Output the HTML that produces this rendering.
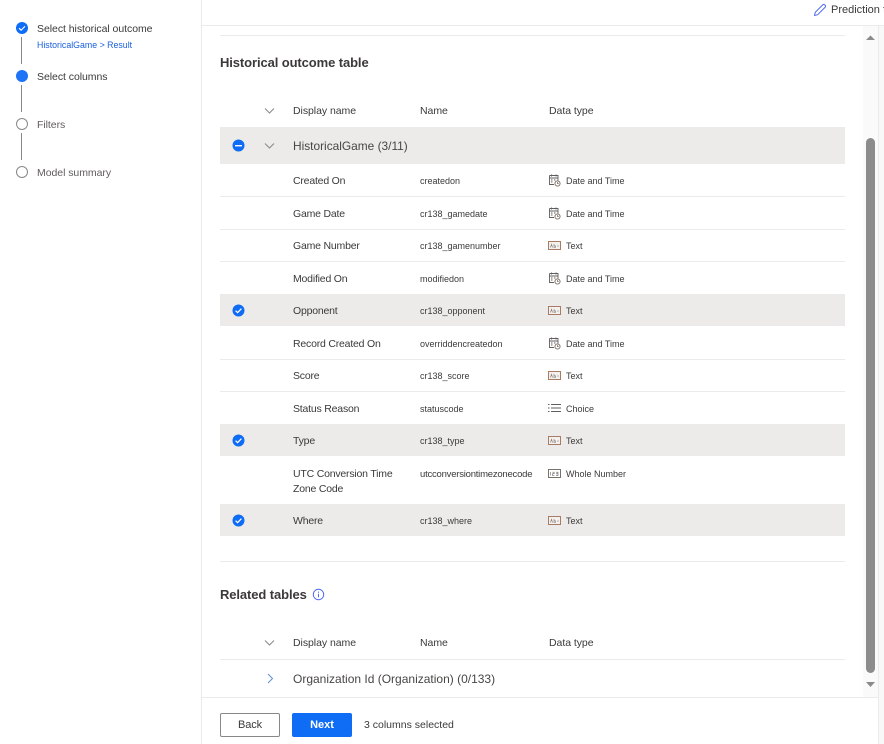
<!DOCTYPE html>
<html><head><meta charset="utf-8"><style>
html,body{margin:0;padding:0;background:#fff}
body{width:884px;height:744px;position:relative;overflow:hidden;font-family:"Liberation Sans",sans-serif;color:#3b3a39}
.t{position:absolute;white-space:nowrap;line-height:16px;font-size:10.5px;letter-spacing:-.2px;margin-top:1px}
.x{font-size:10.5px;letter-spacing:-.05px}
.n{font-size:9px;letter-spacing:0;color:#3b3a39;margin-top:0}
.d{font-size:9px;letter-spacing:0;color:#3b3a39;margin-top:0}
.h{position:absolute;background:#edebe9;left:220px;width:625px}
.l{position:absolute;background:#edebe9;height:1px}
.s{position:absolute}
</style></head><body>

<div class="l" style="left:201px;top:0;width:1px;height:744px"></div>
<div class="l" style="left:202px;top:25px;width:682px"></div>
<div class="l" style="left:220px;top:35px;width:625px"></div>

<svg class="s" style="left:0;top:0" width="40" height="190">
<circle cx="22" cy="28" r="6" fill="#0f6cf5"/><path d="M19 28.2l2.1 2 3.9-4" fill="none" stroke="#fff" stroke-width="1.1"/>
<rect x="21" y="37" width="1" height="27" fill="#8a8886"/>
<circle cx="22" cy="76" r="6" fill="#1f73f7"/>
<rect x="21" y="85" width="1" height="27" fill="#8a8886"/>
<circle cx="22" cy="124" r="5.5" fill="#fff" stroke="#8a8886"/>
<rect x="21" y="133" width="1" height="27" fill="#8a8886"/>
<circle cx="22" cy="172" r="5.5" fill="#fff" stroke="#8a8886"/>
</svg>
<div class="t x" style="left:37px;top:20px">Select historical outcome</div>
<div class="t" style="left:37px;top:36px;font-size:8.8px;letter-spacing:0;color:#1a5fdc">HistoricalGame &gt; Result</div>
<div class="t x" style="left:37px;top:68px">Select columns</div>
<div class="t x" style="left:37px;top:116px;color:#605e5c">Filters</div>
<div class="t x" style="left:37px;top:164px;color:#605e5c">Model summary</div>

<svg class="s" style="left:812px;top:2px" width="16" height="16"><path d="M2.5 13.5l.8-3.2 7.4-7.4a1.3 1.3 0 0 1 2 0l.4.4a1.3 1.3 0 0 1 0 2l-7.4 7.4z" fill="none" stroke="#4f6bed" stroke-width="1"/></svg>
<div class="t" style="left:831px;top:1px;font-size:11px;letter-spacing:0">Prediction f</div>

<div class="t" style="left:220px;top:54px;font-size:13px;font-weight:bold;letter-spacing:-.1px">Historical outcome table</div>

<svg class="s" style="left:264px;top:106px" width="12" height="10"><path d="M1 2.5l4.5 4.5 4.5-4.5" fill="none" stroke="#8a8886"/></svg>
<div class="t x" style="left:293px;top:102px">Display name</div>
<div class="t x" style="left:420px;top:102px">Name</div>
<div class="t x" style="left:549px;top:102px">Data type</div>

<div class="h" style="top:127px;height:37px"></div>
<svg class="s" style="left:232px;top:139px" width="13" height="13"><circle cx="6.5" cy="6.5" r="6" fill="#0f6cf5"/><rect x="3" y="6" width="7" height="1.4" fill="#fff"/></svg>
<svg class="s" style="left:264px;top:141px" width="12" height="10"><path d="M1 2.5l4.5 4.5 4.5-4.5" fill="none" stroke="#8a8886"/></svg>
<div class="t" style="left:293px;top:137px;font-size:11.9px;letter-spacing:0;color:#484644">HistoricalGame (3/11)</div>

<div class="h" style="top:294px;height:32px"></div>
<div class="h" style="top:424px;height:32px"></div>
<div class="h" style="top:504px;height:32px"></div>

<div class="l" style="left:220px;top:196px;width:625px"></div>
<div class="l" style="left:220px;top:229px;width:625px"></div>
<div class="l" style="left:220px;top:261px;width:625px"></div>
<div class="l" style="left:220px;top:359px;width:625px"></div>
<div class="l" style="left:220px;top:391px;width:625px"></div>
<div class="l" style="left:220px;top:561px;width:625px"></div>
<div class="l" style="left:220px;top:659px;width:625px"></div>

<svg width="0" height="0" style="position:absolute"><defs>
<symbol id="cal" viewBox="0 0 13 13"><path d="M1.5 1.5h8.5v5M6 10.5H1.5v-9M1.5 4h8.5M3.5.5v2M8 .5v2M3 6h1.5M6 6h1.5M3 8h1.5" fill="none" stroke="#605e5c" stroke-width=".9"/><circle cx="9.5" cy="9.5" r="2.6" fill="none" stroke="#7a6a60" stroke-width=".9"/><path d="M9.5 8v1.5h1.2" fill="none" stroke="#605e5c" stroke-width=".7"/></symbol>
<symbol id="abc" viewBox="0 0 13 10"><rect x=".5" y=".5" width="12" height="8" fill="#f6f0ec" stroke="#a87b64"/><path d="M2.5 6.5l1-3.2 1 3.2M6 3v3.5h1.4V4.8H6M9 5h2" fill="none" stroke="#777" stroke-width=".6"/></symbol>
<symbol id="num" viewBox="0 0 13 10"><rect x=".5" y=".5" width="12" height="8" fill="#fff" stroke="#7a7268"/><path d="M2.5 3v3.5M4.5 3.2h1.6v1.5H4.5v1.7h1.8M8 3.2h2v3.2H8M8 4.8h2" fill="none" stroke="#666" stroke-width=".6"/></symbol>
<symbol id="chk" viewBox="0 0 13 13"><circle cx="6.5" cy="6.5" r="6" fill="#0f6cf5"/><path d="M3.6 6.7l2 1.9 3.8-3.9" fill="none" stroke="#fff" stroke-width="1.2"/></symbol>
</defs></svg>

<div class="t" style="left:293px;top:172px">Created On</div><div class="t n" style="left:420px;top:173px">createdon</div>
<svg class="s" style="left:548px;top:174px" width="13" height="13"><use href="#cal"/></svg><div class="t d" style="left:566px;top:173px">Date and Time</div>

<div class="t" style="left:293px;top:205px">Game Date</div><div class="t n" style="left:420px;top:206px">cr138_gamedate</div>
<svg class="s" style="left:548px;top:207px" width="13" height="13"><use href="#cal"/></svg><div class="t d" style="left:566px;top:206px">Date and Time</div>

<div class="t" style="left:293px;top:237px">Game Number</div><div class="t n" style="left:420px;top:238px">cr138_gamenumber</div>
<svg class="s" style="left:548px;top:241px" width="13" height="10"><use href="#abc"/></svg><div class="t d" style="left:566px;top:238px">Text</div>

<div class="t" style="left:293px;top:270px">Modified On</div><div class="t n" style="left:420px;top:271px">modifiedon</div>
<svg class="s" style="left:548px;top:272px" width="13" height="13"><use href="#cal"/></svg><div class="t d" style="left:566px;top:271px">Date and Time</div>

<svg class="s" style="left:232px;top:304px" width="13" height="13"><use href="#chk"/></svg>
<div class="t" style="left:293px;top:302px">Opponent</div><div class="t n" style="left:420px;top:303px">cr138_opponent</div>
<svg class="s" style="left:548px;top:306px" width="13" height="10"><use href="#abc"/></svg><div class="t d" style="left:566px;top:303px">Text</div>

<div class="t" style="left:293px;top:335px">Record Created On</div><div class="t n" style="left:420px;top:336px">overriddencreatedon</div>
<svg class="s" style="left:548px;top:337px" width="13" height="13"><use href="#cal"/></svg><div class="t d" style="left:566px;top:336px">Date and Time</div>

<div class="t" style="left:293px;top:367px">Score</div><div class="t n" style="left:420px;top:368px">cr138_score</div>
<svg class="s" style="left:548px;top:371px" width="13" height="10"><use href="#abc"/></svg><div class="t d" style="left:566px;top:368px">Text</div>

<div class="t" style="left:293px;top:400px">Status Reason</div><div class="t n" style="left:420px;top:401px">statuscode</div>
<svg class="s" style="left:548px;top:403px" width="13" height="11"><path d="M0 1.5h1.5M3 1.5h10M0 5h1.5M3 5h10M0 8.5h1.5M3 8.5h10" stroke="#605e5c" stroke-width="1"/></svg><div class="t d" style="left:566px;top:401px">Choice</div>

<svg class="s" style="left:232px;top:434px" width="13" height="13"><use href="#chk"/></svg>
<div class="t" style="left:293px;top:432px">Type</div><div class="t n" style="left:420px;top:433px">cr138_type</div>
<svg class="s" style="left:548px;top:436px" width="13" height="10"><use href="#abc"/></svg><div class="t d" style="left:566px;top:433px">Text</div>

<div class="t" style="left:293px;top:465px">UTC Conversion Time</div><div class="t" style="left:293px;top:480px">Zone Code</div>
<div class="t n" style="left:420px;top:466px;margin-top:1px;font-size:9.5px;letter-spacing:-.22px">utcconversiontimezonecode</div>
<svg class="s" style="left:548px;top:469px" width="13" height="10"><use href="#num"/></svg><div class="t d" style="left:566px;top:466px">Whole Number</div>

<svg class="s" style="left:232px;top:514px" width="13" height="13"><use href="#chk"/></svg>
<div class="t" style="left:293px;top:512px">Where</div><div class="t n" style="left:420px;top:513px">cr138_where</div>
<svg class="s" style="left:548px;top:516px" width="13" height="10"><use href="#abc"/></svg><div class="t d" style="left:566px;top:513px">Text</div>

<div class="t" style="left:220px;top:586px;font-size:13px;font-weight:bold;letter-spacing:-.1px">Related tables</div>
<svg class="s" style="left:312px;top:588px" width="13" height="13"><circle cx="6.5" cy="6.5" r="5.2" fill="none" stroke="#4f6bed"/><path d="M6.5 5.8v3.4M6.5 3.6v1.1" stroke="#4f6bed"/></svg>

<svg class="s" style="left:264px;top:638px" width="12" height="10"><path d="M1 2.5l4.5 4.5 4.5-4.5" fill="none" stroke="#8a8886"/></svg>
<div class="t x" style="left:293px;top:634px">Display name</div>
<div class="t x" style="left:420px;top:634px">Name</div>
<div class="t x" style="left:549px;top:634px">Data type</div>

<svg class="s" style="left:266px;top:673px" width="10" height="12"><path d="M2 1l4.5 4.5L2 10" fill="none" stroke="#5f8fd0"/></svg>
<div class="t" style="left:293px;top:670px;font-size:12px;letter-spacing:0;color:#484644">Organization Id (Organization) (0/133)</div>

<div class="s" style="left:863px;top:26px;width:15px;height:671px;background:#fafafa"></div>
<div class="s" style="left:878px;top:26px;width:6px;height:718px;background:#f8f8f8;border-left:1px solid #edebe9;box-sizing:border-box"></div>
<svg class="s" style="left:864px;top:33px" width="15" height="8"><path d="M2 7l4.5-4.5 4.5 4.5z" fill="#8a8a8a"/></svg>
<div class="s" style="left:866px;top:138px;width:9px;height:535px;background:#8c8c8c;border-radius:5px"></div>
<svg class="s" style="left:863px;top:681px" width="15" height="8"><path d="M3 1h9l-4.5 5z" fill="#8a8a8a"/></svg>

<div class="l" style="left:202px;top:697px;width:676px"></div>
<div class="s" style="left:220px;top:713px;width:60px;height:24px;box-sizing:border-box;border:1px solid #8a8886;border-radius:2px;background:#fff;text-align:center;font-size:11px;letter-spacing:-.1px;line-height:22px">Back</div>
<div class="s" style="left:292px;top:713px;width:60px;height:24px;border-radius:2px;background:#0f6cf5;color:#fff;text-align:center;font-size:11px;font-weight:bold;line-height:24px">Next</div>
<div class="t" style="left:364px;top:716px;font-size:10.5px;letter-spacing:0">3 columns selected</div>

</body></html>
